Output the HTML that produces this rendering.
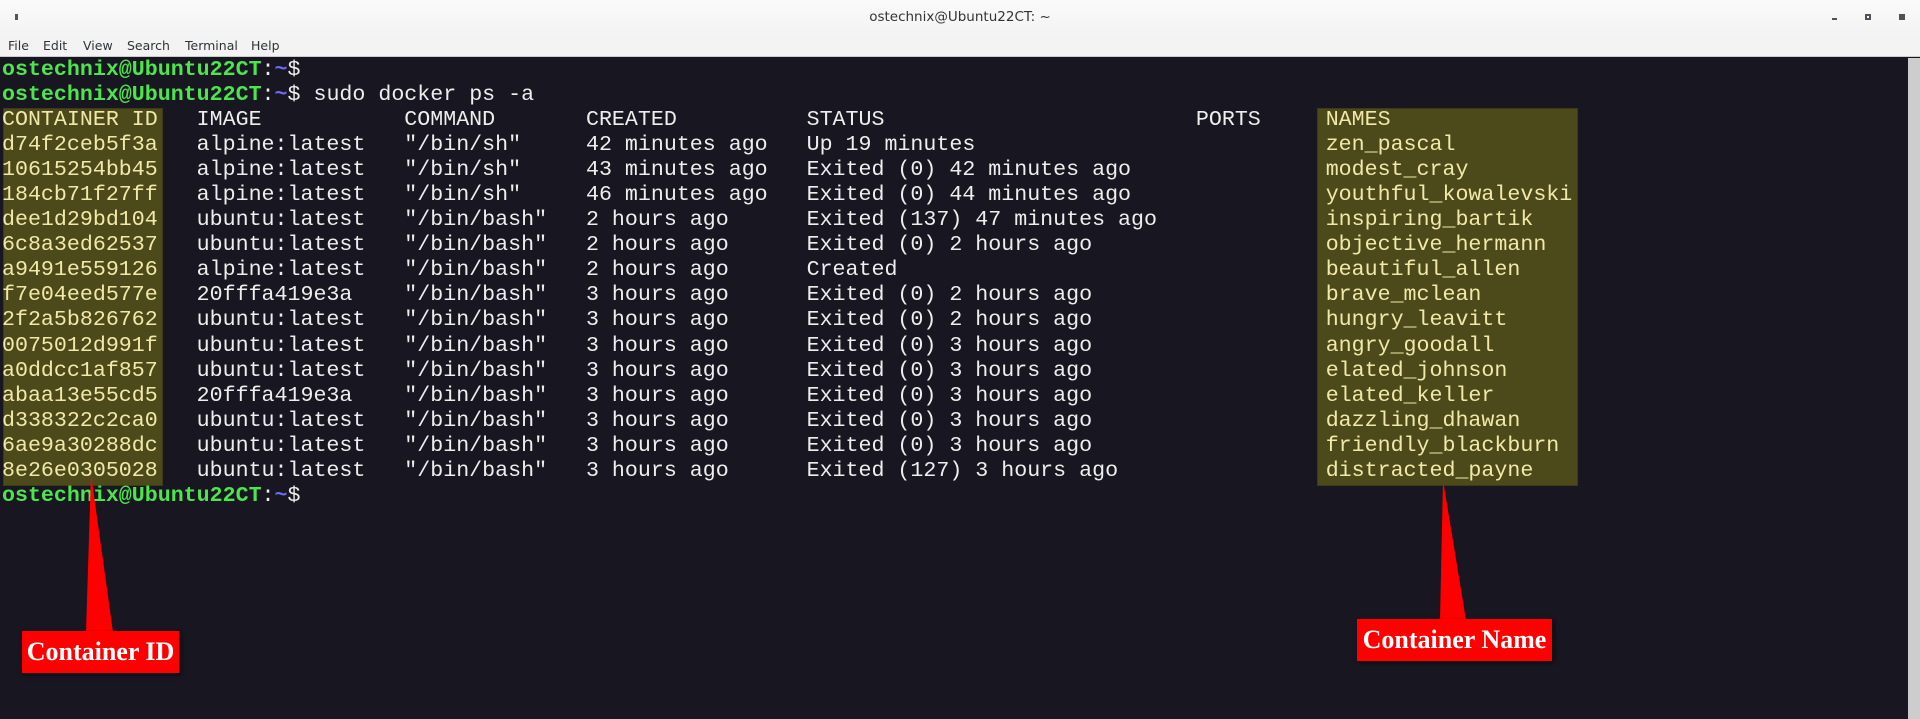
<!DOCTYPE html>
<html><head><meta charset="utf-8"><style>
*{margin:0;padding:0;box-sizing:border-box}
body{width:1920px;height:719px;overflow:hidden;background:#171621;position:relative;font-family:"Liberation Sans",sans-serif}
#title{position:absolute;left:0;top:0;width:1920px;height:36px;background:linear-gradient(#fafafa,#f3f3f3);}
#title .t{position:absolute;left:0;width:1920px;top:9px;text-align:center;font-size:13.5px;color:#333;font-family:"DejaVu Sans",sans-serif}
#menu{position:absolute;left:0;top:36px;width:1920px;height:21px;background:#f3f3f3;border-bottom:1px solid #ccc;font-family:"DejaVu Sans",sans-serif;font-size:12.5px;color:#2e3436}
#menu span{position:absolute;top:2px}
#term{position:absolute;left:0;top:58px;width:1908px;height:661px;background:#171621}
#sb{position:absolute;left:1908px;top:58px;width:12px;height:661px;background:#cdcdcd}
pre{position:absolute;left:2px;top:58px;font-family:"Liberation Mono",monospace;font-size:21.63px;line-height:25.05px;color:#eeeeec}
.g{color:#4ee44e;font-weight:bold}.b{color:#6b6bf5;font-weight:bold}
.hl{position:absolute;background:#4c491b;border:1px solid #3c3a18}
.hlt{color:#f2e9a8}
.box{position:absolute;background:#ff0000;color:#fff;font-family:"Liberation Serif",serif;font-weight:bold;font-size:26px;box-shadow:2px 2px 4px rgba(0,0,0,.5);text-align:center}
</style></head><body>
<div id="title"><div style="position:absolute;left:15px;top:14px;width:3px;height:6px;background:#555"></div><div class="t">ostechnix@Ubuntu22CT: ~</div>
<div style="position:absolute;left:1832px;top:18px;width:5px;height:2px;background:#4a5459"></div>
<div style="position:absolute;left:1865px;top:14px;width:6px;height:6px;border:2px solid #4a5459"></div>
<div style="position:absolute;left:1899px;top:14px;width:6px;height:6px;background:#4a5459"></div>
</div>
<div id="menu"><span style="left:8px">File</span><span style="left:43px">Edit</span><span style="left:83px">View</span><span style="left:127px">Search</span><span style="left:185px">Terminal</span><span style="left:251px">Help</span></div>
<div id="term"></div><div id="sb"></div>
<div class="hl" style="left:3px;top:108px;width:160px;height:378px"></div>
<div class="hl" style="left:1317px;top:108px;width:261px;height:378px"></div>
<pre><span class="g">ostechnix@Ubuntu22CT</span>:<span class="b">~</span>$
<span class="g">ostechnix@Ubuntu22CT</span>:<span class="b">~</span>$ sudo docker ps -a
<span class="hlt">CONTAINER ID</span>   IMAGE           COMMAND       CREATED          STATUS                        PORTS     <span class="hlt">NAMES</span>
<span class="hlt">d74f2ceb5f3a</span>   alpine:latest   "/bin/sh"     42 minutes ago   Up 19 minutes                           <span class="hlt">zen_pascal</span>
<span class="hlt">10615254bb45</span>   alpine:latest   "/bin/sh"     43 minutes ago   Exited (0) 42 minutes ago               <span class="hlt">modest_cray</span>
<span class="hlt">184cb71f27ff</span>   alpine:latest   "/bin/sh"     46 minutes ago   Exited (0) 44 minutes ago               <span class="hlt">youthful_kowalevski</span>
<span class="hlt">dee1d29bd104</span>   ubuntu:latest   "/bin/bash"   2 hours ago      Exited (137) 47 minutes ago             <span class="hlt">inspiring_bartik</span>
<span class="hlt">6c8a3ed62537</span>   ubuntu:latest   "/bin/bash"   2 hours ago      Exited (0) 2 hours ago                  <span class="hlt">objective_hermann</span>
<span class="hlt">a9491e559126</span>   alpine:latest   "/bin/bash"   2 hours ago      Created                                 <span class="hlt">beautiful_allen</span>
<span class="hlt">f7e04eed577e</span>   20fffa419e3a    "/bin/bash"   3 hours ago      Exited (0) 2 hours ago                  <span class="hlt">brave_mclean</span>
<span class="hlt">2f2a5b826762</span>   ubuntu:latest   "/bin/bash"   3 hours ago      Exited (0) 2 hours ago                  <span class="hlt">hungry_leavitt</span>
<span class="hlt">0075012d991f</span>   ubuntu:latest   "/bin/bash"   3 hours ago      Exited (0) 3 hours ago                  <span class="hlt">angry_goodall</span>
<span class="hlt">a0ddcc1af857</span>   ubuntu:latest   "/bin/bash"   3 hours ago      Exited (0) 3 hours ago                  <span class="hlt">elated_johnson</span>
<span class="hlt">abaa13e55cd5</span>   20fffa419e3a    "/bin/bash"   3 hours ago      Exited (0) 3 hours ago                  <span class="hlt">elated_keller</span>
<span class="hlt">d338322c2ca0</span>   ubuntu:latest   "/bin/bash"   3 hours ago      Exited (0) 3 hours ago                  <span class="hlt">dazzling_dhawan</span>
<span class="hlt">6ae9a30288dc</span>   ubuntu:latest   "/bin/bash"   3 hours ago      Exited (0) 3 hours ago                  <span class="hlt">friendly_blackburn</span>
<span class="hlt">8e26e0305028</span>   ubuntu:latest   "/bin/bash"   3 hours ago      Exited (127) 3 hours ago                <span class="hlt">distracted_payne</span>
<span class="g">ostechnix@Ubuntu22CT</span>:<span class="b">~</span>$</pre>
<svg style="position:absolute;left:0;top:0" width="1920" height="719">
<polygon points="91,474 86,632 113,632" fill="#ff0000"/>
<polygon points="1443,480 1440,620 1466,620" fill="#ff0000"/>
</svg>
<div class="box" style="left:22px;top:631px;width:157px;height:42px;line-height:42px">Container ID</div>
<div class="box" style="left:1357px;top:619px;width:195px;height:42px;line-height:42px">Container Name</div>
</body></html>
